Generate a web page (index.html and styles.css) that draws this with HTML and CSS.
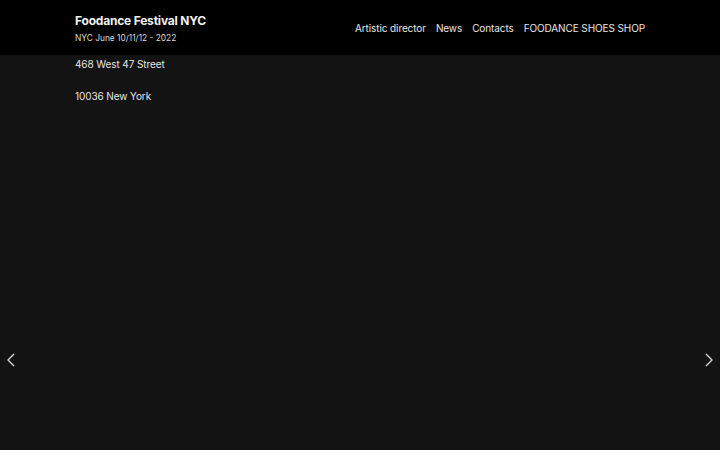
FILE: index.html
```html
<!DOCTYPE html>
<html lang="en">
<head>
  <meta charset="UTF-8" />
  <meta name="viewport" content="width=device-width, initial-scale=1.0"/>
  <title>Foodance Festival NYC</title>
  <link rel="stylesheet" href="styles.css">
</head>
<body>
  <header class="top">
    <div class="brand">
      <a class="title" href="#">Foodance Festival NYC</a>
      <span class="dates">NYC June 10/11/12 - 2022</span>
    </div>
    <nav class="menu">
      <a href="#">Artistic director</a>
      <a href="#">News</a>
      <a href="#">Contacts</a>
      <a href="#">FOODANCE SHOES SHOP</a>
    </nav>
  </header>

  <main class="slide">
    <div class="address">
      <p>468 West 47 Street</p>
      <p>10036 New York</p>
    </div>
    <button class="arrow prev" type="button" aria-label="Previous">
      <svg width="8" height="14" viewBox="0 0 8 14"><path d="M7 1L1 7l6 6" fill="none" stroke="#ddd" stroke-width="1.3"/></svg>
    </button>
    <button class="arrow next" type="button" aria-label="Next">
      <svg width="8" height="14" viewBox="0 0 8 14"><path d="M1 1l6 6-6 6" fill="none" stroke="#ddd" stroke-width="1.3"/></svg>
    </button>
  </main>
</body>
</html>
```

FILE: styles.css
```css
html, body {
  height: 100%;
}
body {
  margin: 0;
  font-family: Inter, "Liberation Sans", sans-serif;
  background: #131313;
  color: #e8e8e8;
  display: flex;
  flex-direction: column;
}
a {
  color: inherit;
  text-decoration: none;
}
.top {
  background: #000;
  height: 55px;
  display: flex;
  align-items: center;
  justify-content: space-between;
  padding: 0 75px;
  flex-shrink: 0;
}
.brand {
  display: flex;
  flex-direction: column;
  gap: 5px;
  margin-top: 1px;
}
.title {
  font-size: 12px;
  font-weight: 700;
  color: #f2f2f2;
  letter-spacing: -0.2px;
}
.dates {
  font-size: 8.4px;
  color: #d8d8d8;
}
.menu {
  display: flex;
  gap: 10px;
  font-size: 10px;
  color: #e6e6e6;
  letter-spacing: -0.1px;
}
.slide {
  flex: 1;
  position: relative;
  padding: 0 75px;
}
.address p {
  margin: 3px 0 0;
  font-size: 10px;
  color: #e4e4e4;
  line-height: 13px;
  letter-spacing: -0.1px;
}
.address p + p {
  margin-top: 19px;
}
.arrow {
  position: absolute;
  top: 298px;
  background: none;
  border: 0;
  padding: 0;
  cursor: pointer;
}
.arrow.prev {
  left: 7px;
}
.arrow.next {
  right: 7px;
}
```
